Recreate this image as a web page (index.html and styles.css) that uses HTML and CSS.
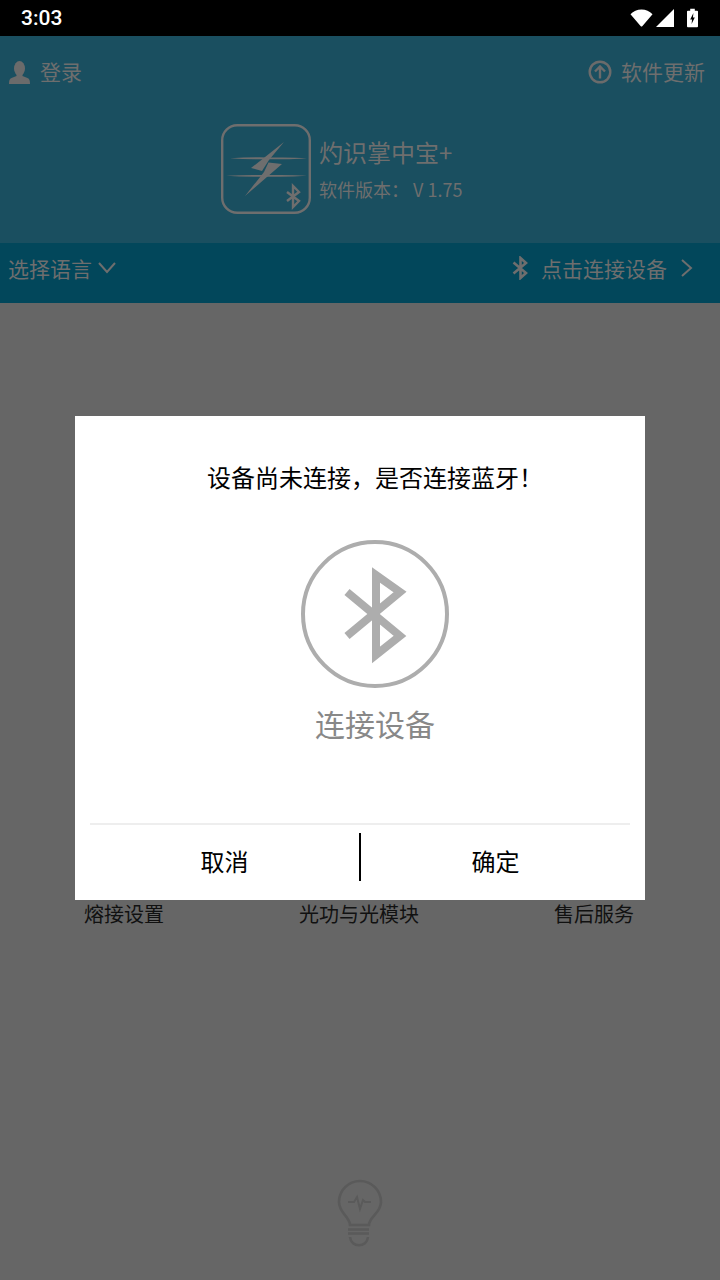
FILE: index.html
```html
<!DOCTYPE html>
<html lang="zh-CN">
  <head>
    <meta charset="UTF-8" />
    <meta name="viewport" content="width=device-width, initial-scale=1.0" />
    <title>灼识掌中宝+</title>
    <link rel="stylesheet" href="styles.css">
  </head>
  <body>
    <div class="statusBar">
      <span class="statusTime">3:03</span>
      <div class="statusIcons">
        <svg class="iconWifi" viewBox="0 0 24 18"><path d="M0.500 5C3.500 2 7.500 0.200 12 0.200s8.500 1.800 11.500 4.800L13 17.300a1.300 1.300 0 0 1-2 0z" fill="#fff"/></svg>
        <svg class="iconSignal" viewBox="0 0 18 18"><path d="M18 0v18H0z" fill="#fff"/></svg>
        <svg class="iconBattery" viewBox="0 0 12 20"><path d="M3.500 0h5v2H11a1 1 0 0 1 1 1v16a1 1 0 0 1-1 1H1a1 1 0 0 1-1-1V3a1 1 0 0 1 1-1h2.500z" fill="#fff"/><path d="M7 4.500L3.500 11.500H5.500L5 16.500L8.500 9.500H6.500z" fill="#000"/></svg>
      </div>
    </div>

    <div class="header">
      <div class="headerTop">
        <div class="headerLink">
          <svg class="iconUser" viewBox="0 0 21 23" fill="#6b6b6b">
            <ellipse cx="10.500" cy="7.500" rx="5.500" ry="7.500"/>
            <path d="M7.500 13h6v2l5 2c2 .8 2.500 2.500 2.500 6H0c0-3.500.5-5.200 2.500-6l5-2z"/>
          </svg>
          <span>登录</span>
        </div>
        <div class="headerLink">
          <svg class="iconUpdate" viewBox="0 0 24 24" fill="none" stroke="#6b6b6b" stroke-width="2.400"><circle cx="12" cy="12" r="10.300"/><path d="M12 18.500V7M7 11.500L12 6.500l5 5"/></svg>
          <span>软件更新</span>
        </div>
      </div>
      <div class="appInfo">
        <svg class="appLogo" viewBox="0 0 90 90">
          <rect x="1.200" y="1.200" width="87.600" height="87.600" rx="15" fill="none" stroke="#6e6e6e" stroke-width="2.400"/>
          <path d="M9 34.200Q30 33 47 33.400L62 33.400Q75 33.400 86 34.200Q70 35.400 60 35.200L46 35.200Q25 35.400 9 34.200z" fill="#6e6e6e"/>
          <path d="M5 51.800Q25 50.600 40 51L55 51Q72 50.800 86 51.800Q70 53 55 52.800L38 52.800Q20 53 5 51.800z" fill="#6e6e6e"/>
          <path d="M63 18L30 44L41 47L48 36z" fill="#6e6e6e"/>
          <path d="M47.500 38.500L61 40L24 72L43 48z" fill="#6e6e6e"/>
          <path d="M66 68L78 77L72 83V62L78 68L66 77" fill="none" stroke="#6e6e6e" stroke-width="2.400"/>
        </svg>
        <div class="appText">
          <div class="appName">灼识掌中宝+</div>
          <div class="appVersion">软件版本： V 1.75</div>
        </div>
      </div>
    </div>

    <div class="band">
      <div class="bandItem">
        <span>选择语言</span>
        <svg class="iconChevronDown" viewBox="0 0 18 12"><path d="M1 1l8 9 8-9" fill="none" stroke="#6e6e6e" stroke-width="2"/></svg>
      </div>
      <div class="bandItem">
        <svg class="iconBt" viewBox="0 0 16 24"><path d="M1.500 6.500L14 17l-5.500 5V2L14 7 1.500 17.500" fill="none" stroke="#6e6e6e" stroke-width="2.600"/></svg>
        <span class="bandConnect">点击连接设备</span>
        <svg class="iconChevronRight" viewBox="0 0 12 18"><path d="M1 1l9 8-9 8" fill="none" stroke="#6e6e6e" stroke-width="2"/></svg>
      </div>
    </div>

    <div class="main">
      <div class="menuLabels">
        <span>熔接设置</span>
        <span>光功与光模块</span>
        <span>售后服务</span>
      </div>
      <svg class="iconBulb" viewBox="0 0 46 68" fill="none" stroke="#5a5a5a" stroke-width="2.600">
        <path d="M13 46C13 38 2 34 2 23A21 21 0 0 1 44 23C44 34 32 38 32 46z"/>
        <path d="M11 23h6l3-5 3 12 3-9 2 2h6" stroke-width="2"/>
        <path d="M11 50.500h21M11 54.500h21M13 58c1 11 17 11 18 0"/>
      </svg>
    </div>

    <div class="dialog">
      <div class="dialogBody">
        <p class="dialogTitle">设备尚未连接，是否连接蓝牙！</p>
        <svg class="dialogIcon" viewBox="0 0 148 148">
          <circle cx="74" cy="74" r="72" fill="none" stroke="#adadad" stroke-width="4"/>
          <path d="M46 52L99 96L75 115V35L99 52L46 96" fill="none" stroke="#adadad" stroke-width="8"/>
        </svg>
        <div class="dialogLabel">连接设备</div>
      </div>
      <div class="dialogLine"></div>
      <div class="dialogButtons">
        <button class="dialogBtn">取消</button>
        <div class="dialogSep"></div>
        <button class="dialogBtn">确定</button>
      </div>
    </div>
  </body>
</html>
```

FILE: styles.css
```css
* {
  margin: 0;
  padding: 0;
  box-sizing: border-box;
}

body {
  position: relative;
  display: flex;
  flex-direction: column;
  width: 720px;
  height: 1280px;
  overflow: hidden;
  background: #666;
  font-family: "Noto Sans CJK SC", "Noto Sans", sans-serif;
}

.statusBar {
  display: flex;
  align-items: center;
  justify-content: space-between;
  height: 36px;
  padding: 0 22px 0 21px;
  background: black;
  color: white;
}

.statusTime {
  font-family: Roboto, sans-serif;
  font-size: 21px;
  font-weight: 500;
}

.statusIcons {
  display: flex;
  align-items: center;
}

.iconWifi {
  width: 23px;
  height: 18px;
}

.iconSignal {
  width: 18px;
  height: 18px;
  margin-left: 3px;
}

.iconBattery {
  width: 11px;
  height: 20px;
  margin-left: 13px;
}

.header {
  height: 207px;
  background: #1a4f60;
  color: #6e6e6e;
}

.headerTop {
  display: flex;
  justify-content: space-between;
  height: 88px;
  padding: 18px 15px 0 9px;
}

.headerLink {
  display: flex;
  align-items: center;
  height: 34px;
  font-size: 21px;
}

.iconUser {
  width: 21px;
  height: 23px;
  margin-right: 10px;
  margin-top: 3px;
}

.iconUpdate {
  width: 24px;
  height: 24px;
  margin-right: 9px;
  margin-top: 1px;
}

.appInfo {
  display: flex;
  align-items: center;
  padding-left: 221px;
}

.appLogo {
  width: 90px;
  height: 90px;
}

.appText {
  margin-left: 8px;
}

.appName {
  font-size: 24px;
  line-height: 34px;
  margin-top: -2px;
}

.appVersion {
  margin-top: 7px;
  font-size: 18px;
  line-height: 26px;
}

.band {
  display: flex;
  align-items: center;
  justify-content: space-between;
  height: 60px;
  padding: 0 27px 10px 8px;
  background: #02475b;
  color: #6e6e6e;
  font-size: 21px;
}

.bandItem {
  display: flex;
  align-items: center;
}

.iconChevronDown {
  width: 18px;
  height: 12px;
  margin-left: 6px;
}

.iconBt {
  width: 16px;
  height: 24px;
}

.bandConnect {
  margin-left: 13px;
}

.iconChevronRight {
  width: 12px;
  height: 18px;
  margin-left: 14px;
}

.main {
  display: flex;
  flex: 1;
  flex-direction: column;
  align-items: center;
  padding: 597px 0 33px;
}

.menuLabels {
  display: flex;
  justify-content: space-between;
  width: 100%;
  padding: 0 86px 0 84px;
  font-size: 20px;
  line-height: 28px;
  color: #111;
}

.iconBulb {
  width: 46px;
  height: 68px;
  margin-top: auto;
}

.dialog {
  position: absolute;
  top: 416px;
  left: 75px;
  display: flex;
  flex-direction: column;
  align-items: center;
  width: 570px;
  height: 484px;
  padding-top: 43px;
  background: white;
}

.dialogBody {
  display: flex;
  flex-direction: column;
  align-items: center;
  width: 100%;
  height: 364px;
  padding-left: 30px;
}

.dialogTitle {
  font-size: 24px;
  line-height: 36px;
  color: black;
}

.dialogIcon {
  flex: none;
  width: 148px;
  height: 148px;
  margin-top: 45px;
}

.dialogLabel {
  margin-top: 13px;
  font-size: 30px;
  line-height: 44px;
  color: #888;
}

.dialogLine {
  width: 540px;
  height: 2px;
  background: #eee;
}

.dialogButtons {
  display: flex;
  align-items: center;
  width: 540px;
  margin-top: 8px;
}

.dialogBtn {
  flex: 1;
  height: 48px;
  padding-top: 6px;
  border: none;
  background: none;
  font-family: inherit;
  font-size: 24px;
  color: black;
}

.dialogSep {
  width: 2px;
  height: 48px;
  background: black;
}
```
